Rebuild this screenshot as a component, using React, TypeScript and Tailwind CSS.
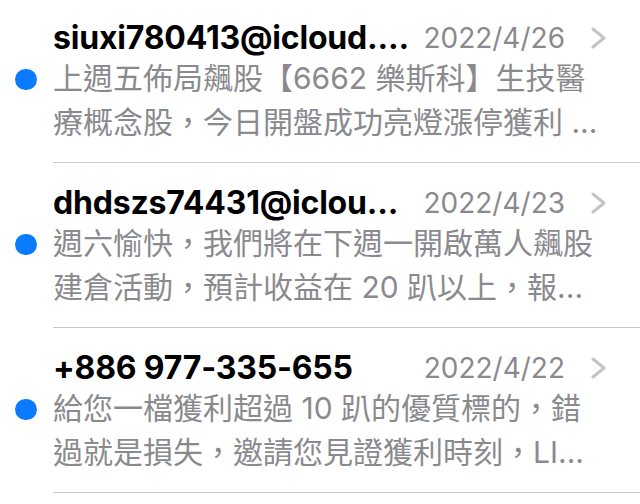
const threads = [
  {
    id: 1,
    sender: 'siuxi780413@icloud....',
    date: '2022/4/26',
    lines: ['上週五佈局飆股【6662 樂斯科】生技醫', '療概念股，今日開盤成功亮燈漲停獲利 ...'],
  },
  {
    id: 2,
    sender: 'dhdszs74431@iclou...',
    date: '2022/4/23',
    lines: ['週六愉快，我們將在下週一開啟萬人飆股', '建倉活動，預計收益在 20 趴以上，報...'],
  },
  {
    id: 3,
    sender: '+886 977-335-655',
    date: '2022/4/22',
    lines: ['給您一檔獲利超過 10 趴的優質標的，錯', '過就是損失，邀請您見證獲利時刻，LI...'],
  },
];

function Chevron() {
  return (
    <svg width="16" height="22" viewBox="0 0 16 22" fill="none" className="shrink-0">
      <polyline
        points="2,2 13,11 2,20"
        stroke="#c4c4c7"
        strokeWidth="3"
        strokeLinecap="round"
        strokeLinejoin="round"
      />
    </svg>
  );
}

export default function App() {
  return (
    <div className="w-[640px] h-[504px] bg-white overflow-hidden font-['Inter','Noto_Sans_CJK_TC',sans-serif]">
      {threads.map((t, idx) => (
        <div key={t.id} className="flex">
          {/* unread dot */}
          <div className={`w-[53px] shrink-0 pl-[15px] ${idx === 0 ? 'pt-[69px]' : 'pt-[71px]'}`}>
            <div className="w-[22px] h-[21px] rounded-full bg-[#0a7aff]" />
          </div>

          <div
            className={`flex-1 border-b border-[#c8c8cc] pb-[18px] pr-[33px] ${idx === 0 ? 'pt-[20px]' : 'pt-[22px]'}`}
          >
            <div className="flex items-center h-[36px]">
              <span className="flex-1 whitespace-nowrap text-[32px] font-bold text-black tracking-[-0.2px]">
                {t.sender}
              </span>
              <span className="whitespace-nowrap text-[28px] text-[#8a8a8e] mr-[26px]">{t.date}</span>
              <Chevron />
            </div>
            {t.lines.map((line, i) => (
              <div key={i} className="h-[44px] leading-[44px] whitespace-nowrap text-[30px] text-[#8a8a8e]">
                {line}
              </div>
            ))}
          </div>
        </div>
      ))}
    </div>
  );
}
